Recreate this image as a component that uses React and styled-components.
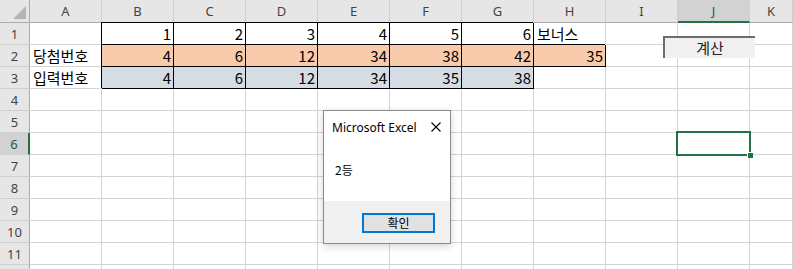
import React from "react";
import styled, { createGlobalStyle } from "styled-components";

const GRID = "#d4d4d4";
const GREEN = "#217346";

const Global = createGlobalStyle`
  body { margin: 0; overflow: hidden; background: #fff; }
`;

const Sheet = styled.div`
  position: relative;
  width: 793px;
  height: 269px;
  overflow: hidden;
  display: grid;
  grid-template-columns: 30px repeat(10, 72px) 1fr;
  grid-template-rows: 23px repeat(12, 22px);
  font-family: "Noto Sans CJK KR", "Noto Sans", sans-serif;
`;

const Corner = styled.div`
  box-sizing: border-box;
  background: #e6e6e6;
  border-right: 1px solid #ababab;
  border-bottom: 1px solid #ababab;
  display: flex;
  align-items: flex-end;
  justify-content: flex-end;
  padding: 0 3px 3px 0;
  &::after {
    content: "";
    width: 13px;
    height: 13px;
    background: #b4b4b4;
    clip-path: polygon(100% 0, 100% 100%, 0 100%);
  }
`;

const ColHead = styled.div`
  box-sizing: border-box;
  background: ${(p) => (p.$active ? "#d2d2d2" : "#e6e6e6")};
  border-right: 1px solid #cfcfcf;
  border-bottom: ${(p) => (p.$active ? `2px solid ${GREEN}` : "1px solid #ababab")};
  display: flex;
  align-items: center;
  justify-content: center;
  padding-top: ${(p) => (p.$active ? "1px" : "0")};
  font: 13px "Noto Sans", sans-serif;
  color: ${(p) => (p.$active ? "#1f5c3a" : "#444")};
`;

const RowHead = styled.div`
  box-sizing: border-box;
  background: ${(p) => (p.$active ? "#d2d2d2" : "#e6e6e6")};
  border-right: ${(p) => (p.$active ? `2px solid ${GREEN}` : "1px solid #ababab")};
  border-bottom: 1px solid #cfcfcf;
  display: flex;
  align-items: center;
  justify-content: center;
  font: 13px "Noto Sans", sans-serif;
  color: ${(p) => (p.$active ? "#1f5c3a" : "#444")};
`;

const Cell = styled.div`
  box-sizing: border-box;
  border-right: 1px solid ${(p) => (p.$boxed ? "#000" : GRID)};
  border-bottom: 1px solid ${(p) => (p.$boxed ? "#000" : GRID)};
  box-shadow: ${(p) => (p.$boxed ? "-1px -1px 0 0 #000" : "none")};
  background: ${(p) => p.$fill || "#fff"};
  display: flex;
  align-items: center;
  justify-content: ${(p) => (p.$num ? "flex-end" : "flex-start")};
  padding: 0 2px 1px 3px;
  font-size: 15px;
  color: #000;
  white-space: nowrap;
  position: ${(p) => (p.$selected ? "relative" : "static")};
  ${(p) =>
    p.$selected &&
    `
    &::before {
      content: "";
      position: absolute;
      left: -2px; top: -2px; right: -2px; bottom: -2px;
      border: 2px solid ${GREEN};
    }
    &::after {
      content: "";
      position: absolute;
      right: -4px; bottom: -4px;
      width: 5px; height: 5px;
      background: ${GREEN};
      border-top: 1px solid #fff;
      border-left: 1px solid #fff;
    }
  `}
`;

const SheetButton = styled.button`
  position: absolute;
  left: 663px;
  top: 36px;
  width: 92px;
  height: 22px;
  box-sizing: border-box;
  margin: 0;
  padding: 0;
  background: #f0f0f0;
  border: none;
  border-top: 2px solid #6d6d6d;
  border-left: 2px solid #6d6d6d;
  font: 15px "Noto Sans CJK KR", sans-serif;
  color: #222;
  line-height: 18px;
`;

const Dialog = styled.div`
  position: absolute;
  left: 323px;
  top: 110px;
  width: 128px;
  height: 134px;
  box-sizing: border-box;
  border: 1px solid #8a8a8a;
  background: #fff;
  box-shadow: 0 2px 8px rgba(0, 0, 0, 0.18);
  display: flex;
  flex-direction: column;
`;

const TitleBar = styled.div`
  height: 32px;
  display: flex;
  align-items: center;
  justify-content: space-between;
  padding: 0 9px 2px 8px;
`;

const Title = styled.span`
  font: 12px "Noto Sans", sans-serif;
  color: #000;
`;

const Body = styled.div`
  height: 56px;
  box-sizing: border-box;
  display: flex;
  align-items: center;
  padding: 0 0 7px 11px;
  font: 12px "Noto Sans CJK KR", sans-serif;
  color: #000;
`;

const Footer = styled.div`
  flex: 1;
  background: #f0f0f0;
  display: flex;
  justify-content: flex-end;
  align-items: flex-start;
  padding: 12px 15px 0 0;
`;

const OkButton = styled.button`
  width: 73px;
  height: 20px;
  box-sizing: border-box;
  margin: 0;
  padding: 0;
  background: #e1e1e1;
  border: 2px solid #0078d7;
  font: 12px "Noto Sans CJK KR", sans-serif;
  color: #000;
  line-height: 14px;
`;

const cols = ["A", "B", "C", "D", "E", "F", "G", "H", "I", "J", "K"];

const ORANGE = "#f8cbad";
const BLUE = "#d6dce4";

const data = {
  1: { B: 1, C: 2, D: 3, E: 4, F: 5, G: 6, H: "보너스" },
  2: { A: "당첨번호", B: 4, C: 6, D: 12, E: 34, F: 38, G: 42, H: 35 },
  3: { A: "입력번호", B: 4, C: 6, D: 12, E: 34, F: 35, G: 38 },
};

const boxedFill = (row, col) => {
  if (row === 1 && "BCDEFG".includes(col)) return "#fff";
  if (row === 2 && "BCDEFGH".includes(col)) return ORANGE;
  if (row === 3 && "BCDEFG".includes(col)) return BLUE;
  return null;
};

export default function App() {
  const rows = Array.from({ length: 12 }, (_, i) => i + 1);
  return (
    <>
      <Global />
      <Sheet>
        <Corner />
        {cols.map((c) => (
          <ColHead key={c} $active={c === "J"}>
            {c}
          </ColHead>
        ))}
        {rows.map((r) => (
          <React.Fragment key={r}>
            <RowHead $active={r === 6}>{r}</RowHead>
            {cols.map((c) => {
              const v = data[r] && data[r][c];
              const fill = boxedFill(r, c);
              return (
                <Cell
                  key={c}
                  $boxed={!!fill}
                  $fill={fill}
                  $num={typeof v === "number"}
                  $selected={r === 6 && c === "J"}
                >
                  {v}
                </Cell>
              );
            })}
          </React.Fragment>
        ))}
        <SheetButton>계산</SheetButton>
        <Dialog>
          <TitleBar>
            <Title>Microsoft Excel</Title>
            <svg width="10" height="10" viewBox="0 0 10 10">
              <path d="M0.5 0.5 L9.5 9.5 M9.5 0.5 L0.5 9.5" stroke="#000" strokeWidth="1.1" fill="none" />
            </svg>
          </TitleBar>
          <Body>2등</Body>
          <Footer>
            <OkButton>확인</OkButton>
          </Footer>
        </Dialog>
      </Sheet>
    </>
  );
}
